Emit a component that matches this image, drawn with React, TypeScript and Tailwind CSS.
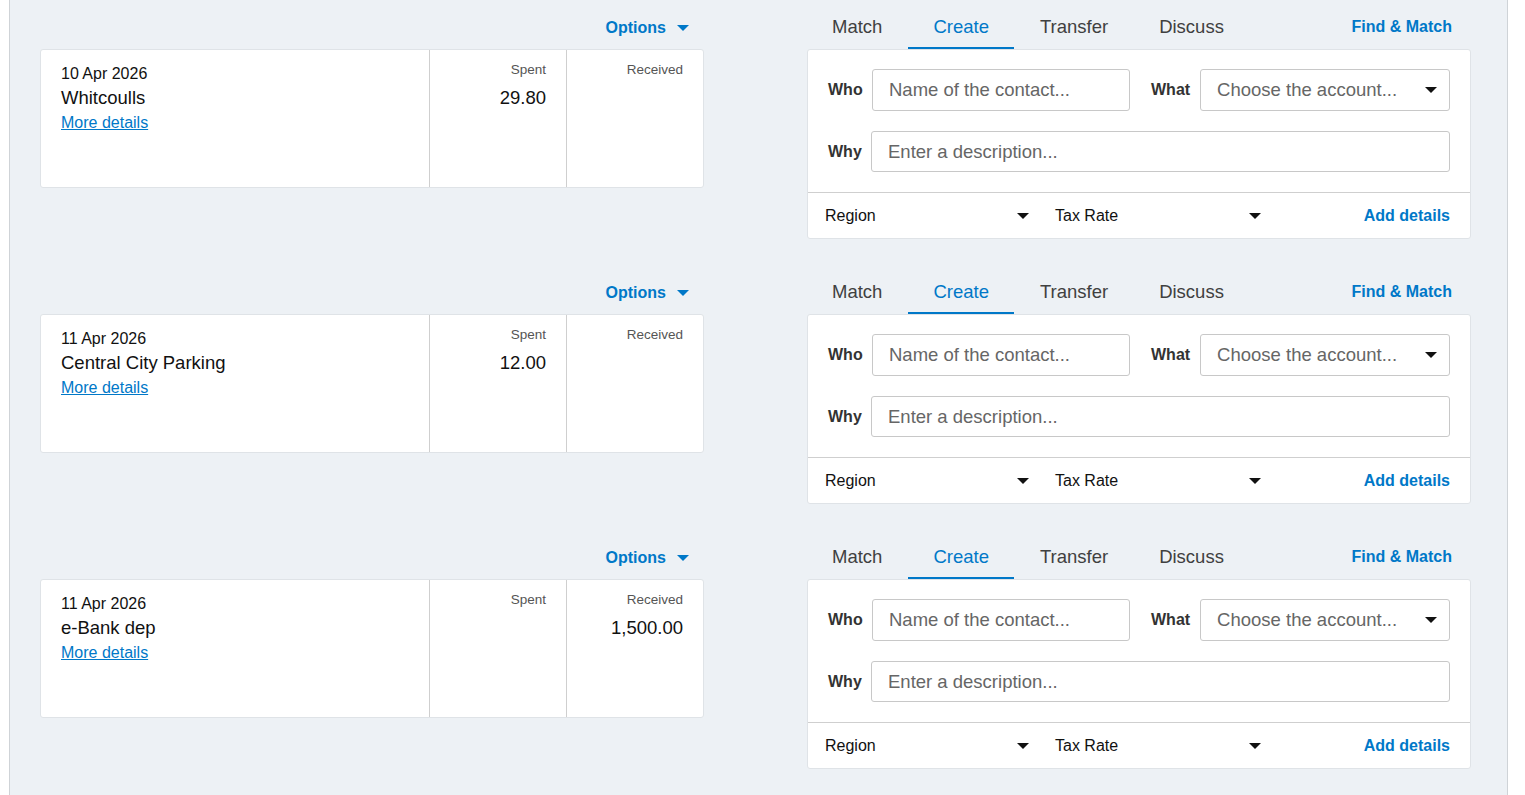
import React from "react";

type Txn = {
  date: string;
  payee: string;
  spent?: string;
  received?: string;
};

const txns: Txn[] = [
  { date: "10 Apr 2026", payee: "Whitcoulls", spent: "29.80" },
  { date: "11 Apr 2026", payee: "Central City Parking", spent: "12.00" },
  { date: "11 Apr 2026", payee: "e-Bank dep", received: "1,500.00" },
];

function Caret({ className }: { className?: string }) {
  return (
    <svg viewBox="0 0 12 6" width="12" height="6" className={className} aria-hidden>
      <path d="M0 0 L12 0 L6 6 Z" fill="currentColor" />
    </svg>
  );
}

function StatementLine({ t }: { t: Txn }) {
  return (
    <div className="w-[664px]">
      <div className="h-[49px] flex items-center justify-end pr-[15px] pt-[7px]">
        <span className="text-[16px] font-bold text-[#0078c8]">Options</span>
        <Caret className="ml-[11px] text-[#0078c8]" />
      </div>
      <div className="h-[139px] flex bg-white border border-[#dfe3e7] rounded-[3px]">
        <div className="w-[388px] pl-5 pt-[14px]">
          <div className="text-[16px] leading-[20px] text-[#111]">{t.date}</div>
          <div className="text-[18.5px] leading-[28px] text-[#111]">{t.payee}</div>
          <a className="block text-[16px] leading-[22px] text-[#0078c8] underline">More details</a>
        </div>
        <div className="w-[137px] border-l border-[#cfcfcf] pr-5 pt-[10px] text-right">
          <div className="text-[13.5px] leading-[20px] text-[#555]">Spent</div>
          <div className="text-[18.5px] leading-[28px] mt-[4px] text-[#111]">{t.spent ?? ""}</div>
        </div>
        <div className="flex-1 border-l border-[#cfcfcf] pr-5 pt-[10px] text-right">
          <div className="text-[13.5px] leading-[20px] text-[#555]">Received</div>
          <div className="text-[18.5px] leading-[28px] mt-[4px] text-[#111]">{t.received ?? ""}</div>
        </div>
      </div>
    </div>
  );
}

function CreatePanel() {
  const tabs = ["Match", "Create", "Transfer", "Discuss"];
  return (
    <div className="w-[664px]">
      <div className="h-[49px] flex items-stretch">
        <div className="flex gap-[1px]">
          {tabs.map((tab) => (
            <div
              key={tab}
              className={
                tab === "Create"
                  ? "px-[25px] pt-[7px] flex items-center text-[18.5px] text-[#0078c8] border-b-2 border-[#0078c8]"
                  : "px-[25px] pt-[7px] flex items-center text-[18.5px] text-[#404040] border-b-2 border-transparent"
              }
            >
              {tab}
            </div>
          ))}
        </div>
        <div className="ml-auto pr-[19px] pt-[5px] flex items-center text-[16px] font-bold text-[#0078c8]">
          Find &amp; Match
        </div>
      </div>
      <div className="bg-white border border-[#dfe3e7] rounded-[3px]">
        <div className="px-5 pt-[19px] pb-5">
          <div className="flex items-center">
            <span className="text-[16px] font-bold text-[#333] w-[34px]">Who</span>
            <div className="ml-[10px] w-[258px] h-[42px] border border-[#c8c8c8] rounded-[3px] flex items-center pl-4 text-[18.5px] text-[#666]">
              Name of the contact...
            </div>
            <span className="ml-[21px] text-[16px] font-bold text-[#333]">What</span>
            <div className="ml-[10px] flex-1 h-[42px] border border-[#c8c8c8] rounded-[3px] flex items-center pl-[16px] pr-[12px] text-[18.5px] text-[#666]">
              <span>Choose the account...</span>
              <Caret className="ml-auto text-[#111]" />
            </div>
          </div>
          <div className="flex items-center mt-[20px]">
            <span className="text-[16px] font-bold text-[#333] w-[33px]">Why</span>
            <div className="ml-[10px] flex-1 h-[41px] border border-[#c8c8c8] rounded-[3px] flex items-center pl-4 text-[18.5px] text-[#666]">
              Enter a description...
            </div>
          </div>
        </div>
        <div className="h-[46px] border-t border-[#cfcfcf] flex items-center pl-[17px] pr-5">
          <div className="w-[204px] flex items-center justify-between text-[16px] text-[#111]">
            <span>Region</span>
            <Caret className="text-[#111]" />
          </div>
          <div className="ml-[26px] w-[206px] flex items-center justify-between text-[16px] text-[#111]">
            <span>Tax Rate</span>
            <Caret className="text-[#111]" />
          </div>
          <span className="ml-auto text-[16px] font-bold text-[#0078c8]">Add details</span>
        </div>
      </div>
    </div>
  );
}

export default function App() {
  return (
    <div
      className="min-h-screen bg-white"
      style={{ fontFamily: '"Liberation Sans", Arial, sans-serif' }}
    >
      <div className="ml-[9px] w-[1499px] min-h-screen bg-[#edf1f5] border-x border-[#cfd3d7] pl-[30px]">
        {txns.map((t, i) => (
          <div key={i} className="flex gap-[103px] items-start h-[265px]">
            <StatementLine t={t} />
            <CreatePanel />
          </div>
        ))}
      </div>
    </div>
  );
}
